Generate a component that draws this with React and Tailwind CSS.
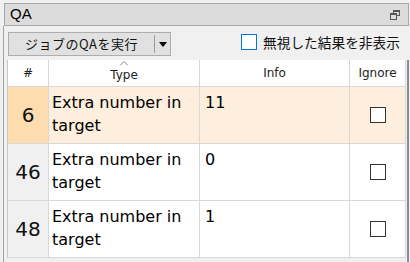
import React from "react";

const rows = [
  { n: "6", info: "11", hl: true },
  { n: "46", info: "0" },
  { n: "48", info: "1" },
];

export default function App() {
  return (
    <div className="w-[410px] h-[262px] bg-[#f0f0f0] overflow-hidden relative" style={{ fontFamily: '"DejaVu Sans", sans-serif' }}>
      <div className="h-[3px]" />
      {/* Title bar */}
      <div className="ml-[4px] mr-[1px] h-[23px] border border-[#a8a8a8] bg-[#dcdcdc] flex items-center justify-between pl-[5px] pr-[8px]">
        <span className="text-[15px] text-black" style={{ fontFamily: '"Liberation Sans", sans-serif' }}>QA</span>
        <svg width="10" height="10" viewBox="0 0 10 10" className="text-[#555]">
          <rect x="3.5" y="0.5" width="6" height="5" fill="none" stroke="currentColor" />
          <rect x="3.5" y="0.5" width="6" height="1.5" fill="currentColor" />
          <rect x="0.5" y="3.5" width="6" height="6" fill="#dcdcdc" stroke="currentColor" />
          <rect x="0.5" y="3.5" width="6" height="1.5" fill="currentColor" />
        </svg>
      </div>
      {/* Panel */}
      <div className="ml-[3px] border-l border-[#a0a0a0] h-[240px] flex flex-col">
        <div className="h-[34px] flex items-start pt-[6px] pl-[4px]">
          <div className="h-[24px] w-[163px] shrink-0 border border-[#adadad] bg-[#e1e1e1] flex items-stretch">
            <div className="flex-1 flex items-center justify-center text-[13px] tracking-[0.5px] text-[#111] whitespace-nowrap" style={{ fontFamily: '"Noto Sans CJK JP", sans-serif' }}>ジョブのQAを実行</div>
            <div className="w-px bg-[#9a9a9a] my-[2px]" />
            <div className="w-[15px] flex items-center justify-center">
              <svg width="8" height="5" viewBox="0 0 8 5"><path d="M0 0 H8 L4 5 Z" fill="#000" /></svg>
            </div>
          </div>
          <div className="ml-[70px] mt-[2px] flex items-center shrink-0">
            <div className="w-[16px] h-[16px] shrink-0 border border-[#0078d7] bg-white" />
            <span className="ml-[6px] text-[13.7px] text-[#111] leading-[16px] whitespace-nowrap" style={{ fontFamily: '"Noto Sans CJK JP", sans-serif' }}>無視した結果を非表示</span>
          </div>
        </div>
        {/* Table */}
        <div className="ml-[3px] w-[399px] border-l border-[#c8c8c8] border-r border-r-[#d8d8d8] relative">
          <div className="flex h-[27px] bg-white border-b border-[#d8d8d8] text-[12px] text-[#222]">
            <div className="w-[41px] border-r border-[#d8d8d8] flex items-center justify-center">#</div>
            <div className="w-[151px] border-r border-[#d8d8d8] flex items-center justify-center relative">
              <svg className="absolute top-[1px] left-1/2 -translate-x-1/2" width="9" height="5" viewBox="0 0 9 5"><path d="M0.5 4.5 L4.5 0.5 L8.5 4.5" fill="none" stroke="#888" /></svg>
              <span className="mt-[4px]">Type</span>
            </div>
            <div className="w-[150px] border-r border-[#d8d8d8] flex items-center justify-center">Info</div>
            <div className="flex-1 flex items-center justify-center">Ignore</div>
          </div>
          {rows.map((r) => (
            <div key={r.n} className={`flex h-[57px] border-b border-[#d8d8d8] ${r.hl ? "bg-[#fdeedd]" : "bg-white"}`}>
              <div className={`w-[41px] border-r border-[#d8d8d8] flex items-center justify-center text-[20px] text-[#111] ${r.hl ? "bg-[#fddcb0]" : "bg-[#f0f0f0]"}`}>{r.n}</div>
              <div className="w-[151px] border-r border-[#d8d8d8] pl-[3px] pt-[4px] text-[16px] leading-[23px] text-black">Extra number in target</div>
              <div className="w-[150px] border-r border-[#d8d8d8] pl-[5px] pt-[4px] text-[16px] leading-[23px] text-black">{r.info}</div>
              <div className="flex-1 flex items-center justify-center">
                <div className="w-[16px] h-[16px] border border-[#333] bg-white" />
              </div>
            </div>
          ))}
          <div className="absolute top-0 right-[-4px] w-[2px] h-[240px] bg-[#8a8a9a]" />
        </div>
      </div>
    </div>
  );
}
